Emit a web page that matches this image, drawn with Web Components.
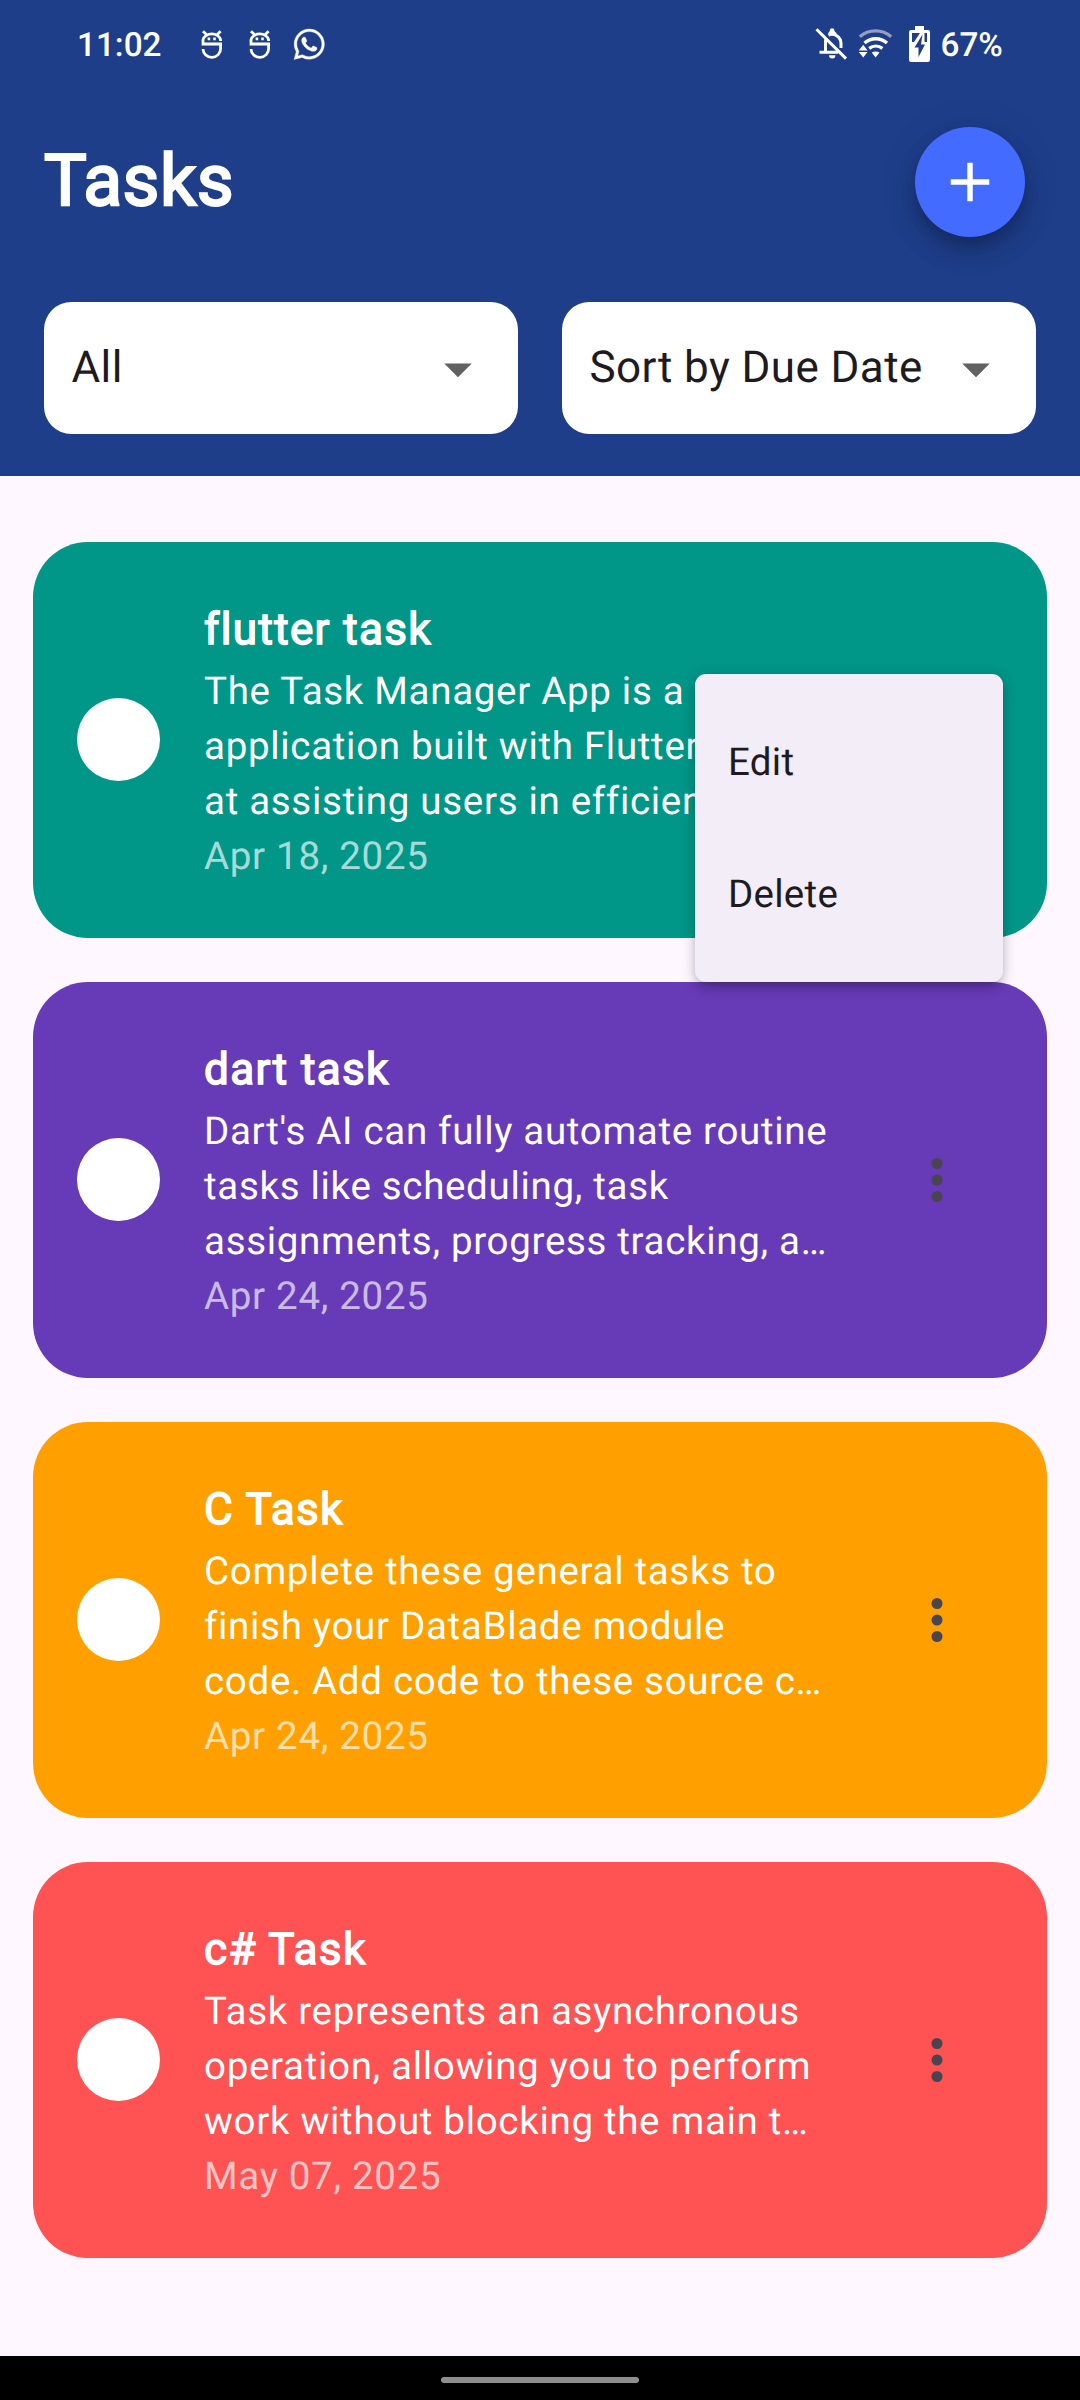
<!DOCTYPE html>
<html lang="en">
<head>
<meta charset="utf-8">
<title>Tasks</title>
<style>
  html, body { margin: 0; padding: 0; }
  body { width: 1080px; height: 2400px; overflow: hidden; font-family: Roboto, sans-serif; text-rendering: geometricPrecision; }
</style>
</head>
<body>
<task-app></task-app>
<script>
const define = (name, html, after) => {
  const t = document.createElement('template');
  t.innerHTML = html;
  customElements.define(name, class extends HTMLElement {
    constructor() {
      super();
      this.attachShadow({ mode: 'open' }).append(t.content.cloneNode(true));
    }
    connectedCallback() { if (after) after(this); }
  });
};

define('robot-icon', `
<style>:host { display: block; } svg { display: block; }</style>
<svg width="32" height="40" viewBox="196 24 32 40"><g fill="none" stroke="#fff" stroke-width="2.8"><path d="M220.6 41V39.8A8.9 7 0 0 0 203 39.8V44H220.6V48.5A8.8 8.6 0 0 1 203 49M203 31.2l3.4 3.2M220.6 31.2l-3.4 3.2"/><path d="M207.6 38.9h2.6M213.2 38.9h2.6"/></g></svg>`);

define('status-bar', `
<style>
  :host { display: flex; height: 88px; box-sizing: border-box; padding: 24px 0 0 77px; color: #fff; font-size: 33.3px; font-weight: 500; line-height: 44px; }
  svg { display: block; flex: none; height: 40px; }
  .time { width: 118.5px; }
  .notes { display: flex; gap: 16.5px; }
  .system { display: flex; margin-left: 487px; }
  .pct { margin-left: 5px; white-space: nowrap; }
</style>
<span class="time">11:02</span>
<div class="notes">
  <robot-icon></robot-icon>
  <robot-icon></robot-icon>
  <svg width="32" viewBox="0 0 32 40"><path transform="translate(1 5) scale(1.27)" fill="#fff" stroke="#fff" stroke-width=".3" d="M17.472 14.382c-.297-.149-1.758-.867-2.03-.967-.273-.099-.471-.148-.67.15-.197.297-.767.966-.94 1.164-.173.199-.347.223-.644.075-.297-.15-1.255-.463-2.39-1.475-.883-.788-1.48-1.761-1.653-2.059-.173-.297-.018-.458.13-.606.134-.133.298-.347.446-.52.149-.174.198-.298.298-.497.099-.198.05-.371-.025-.52-.075-.149-.669-1.612-.916-2.207-.242-.579-.487-.5-.669-.51-.173-.008-.371-.01-.57-.01-.198 0-.52.074-.792.372-.272.297-1.04 1.016-1.04 2.479 0 1.462 1.065 2.875 1.213 3.074.149.198 2.096 3.2 5.077 4.487.709.306 1.262.489 1.694.625.712.227 1.36.195 1.871.118.571-.085 1.758-.719 2.006-1.413.248-.694.248-1.289.173-1.413-.074-.124-.272-.198-.57-.347m-5.421 7.403h-.004a9.87 9.87 0 01-5.031-1.378l-.361-.214-3.741.982.998-3.648-.235-.374a9.86 9.86 0 01-1.51-5.26c.001-5.45 4.436-9.884 9.888-9.884 2.64 0 5.122 1.03 6.988 2.898a9.825 9.825 0 012.893 6.994c-.003 5.45-4.437 9.884-9.885 9.884m8.413-18.297A11.815 11.815 0 0012.05 0C5.495 0 .16 5.335.157 11.892c0 2.096.547 4.142 1.588 5.945L.057 24l6.305-1.654a11.882 11.882 0 005.683 1.448h.005c6.554 0 11.89-5.335 11.893-11.893a11.821 11.821 0 00-3.48-8.413Z"/></svg>
</div>
<div class="system">
  <svg width="40" viewBox="812 24 40 40"><g fill="none" stroke="#fff" stroke-width="3"><path d="M816.5 29.2L846 58.6M825.5 39.5V52M819.5 52.3H838M828.5 35A9.2 9.2 0 0 1 841 43.6V48"/></g><path fill="#fff" d="M828.6 35v-2.5q.9-.3 1.2-2a2.3 2.3 0 0 1 4.6 0q.3 1.7 2.2 2.5V35zM829 55.2h6.4a3.2 3.2 0 0 1-6.4 0z"/></svg>
  <svg width="44" viewBox="852 24 44 40"><g fill="none" stroke="#fff" stroke-width="3.3"><path stroke-opacity=".5" d="M859.8 36.8A24 24 0 0 1 891.2 36.8"/><path d="M864.5 43A17 17 0 0 1 887 43M869.2 48.4A11 11 0 0 1 882.4 48.4"/></g><path fill="#fff" d="M871.7 52.6q3.9-2.4 7.8 0l-3.9 4.9zM858.8 50.4h8.8l-4.4-5.6zM858.8 52h8.8l-4.4 5.6z"/></svg>
  <svg width="40" viewBox="896 24 40 40"><path fill="#fff" d="M915 26h9v4h4a2 2 0 0 1 2 2v28a2 2 0 0 1-2 2h-17a2 2 0 0 1-2-2V32a2 2 0 0 1 2-2h4z"/><path fill="#1e3e8a" d="M912 33h8l-6 9h-2zM924.5 33h2.5v9h-2.5zM922.5 34.5L914.5 47.5H918.5V57L925 44.5H921z"/></svg>
  <span class="pct">67%</span>
</div>`);

define('add-button', `
<style>
  :host { display: flex; width: 110px; height: 110px; border-radius: 50%; background: #446bff; align-items: center; justify-content: center;
    box-shadow: 0 8px 14px -3px rgba(0,0,0,.2), 0 16px 27px rgba(0,0,0,.14), 0 3px 40px rgba(0,0,0,.1); }
  svg { display: block; }
</style>
<svg width="66" height="66" viewBox="0 0 24 24"><path fill="#fff" d="M19 13h-6v6h-2v-6H5v-2h6V5h2v6h6v2z"/></svg>`);

define('select-box', `
<style>
  :host { display: flex; flex: 1; height: 132.5px; box-sizing: border-box; padding: 0 27.5px; border-radius: 27.5px; background: #fff; align-items: center; justify-content: space-between; }
  span { color: #1d1b20; font-size: 44px; letter-spacing: .41px; line-height: 66px; white-space: nowrap; padding-bottom: 3px; }
  svg { display: block; flex: none; margin: 1px 0 0 -10px; }
</style>
<span><slot></slot></span>
<svg width="66" height="66" viewBox="0 0 24 24"><path fill="#616161" d="M7 10l5 5 5-5z"/></svg>`);

define('app-header', `
<style>
  :host { display: block; height: 475.5px; box-sizing: border-box; background: #1e3e8a; }
  .top { display: flex; justify-content: space-between; padding: 38.5px 55px 0 44px; align-items: flex-start; }
  h1 { margin: 0; color: #fff; font-size: 71.5px; font-weight: 400; line-height: 109px; letter-spacing: .5px; -webkit-text-stroke: 2.4px #fff; }
  .filters { display: flex; gap: 44px; padding: 65.3px 44px 0; }
</style>
<status-bar></status-bar>
<div class="top"><h1>Tasks</h1><add-button></add-button></div>
<div class="filters"><select-box>All</select-box><select-box>Sort by Due Date</select-box></div>`);

define('popup-menu', `
<style>
  :host { display: block; width: 308px; height: 308px; box-sizing: border-box; padding: 23.5px 0 20.5px; border-radius: 11px; background: #f3edf7;
    box-shadow: 0 8px 11px -5px rgba(0,0,0,.2), 0 3px 14px rgba(0,0,0,.24); }
  div { height: 132px; padding: 0 33px; line-height: 132px; font-size: 38.5px; color: #1d1b20; letter-spacing: .275px; }
</style>
<div>Edit</div><div>Delete</div>`);

define('task-card', `
<style>
  :host { display: flex; position: relative; height: 396px; box-sizing: border-box; padding: 0 77px 0 44px; border-radius: 55px; align-items: center; color: #fff; background: var(--card); }
  .check { flex: none; width: 82.5px; height: 82.5px; border-radius: 50%; background: #fff; }
  .text { margin-left: 44.5px; flex: 1; white-space: nowrap; font-size: 38.5px; line-height: 55px; letter-spacing: .6875px; padding-top: 2px; }
  .title { font-size: 44px; line-height: 64px; padding-bottom: 3px; letter-spacing: 1.375px; -webkit-text-stroke: 1.5px #fff; }
  .date { color: rgba(255,255,255,.68); }
  svg { flex: none; display: block; }
  ::slotted(popup-menu) { position: absolute; left: 662px; top: 132px; z-index: 2; }
</style>
<div class="check"></div>
<div class="text"><div class="title"><slot name="title"></slot></div><div><slot></slot></div><div class="date"><slot name="date"></slot></div></div>
<svg width="66" height="66" viewBox="0 0 24 24"><g fill="#49454f"><circle cx="12" cy="6" r="2"/><circle cx="12" cy="12" r="2"/><circle cx="12" cy="18" r="2"/></g></svg>
<slot name="menu"></slot>`, el => {
  el.style.setProperty('--card', el.getAttribute('color'));
});

define('nav-bar', `
<style>
  :host { display: flex; height: 44px; background: #000; align-items: center; justify-content: center; }
  i { width: 198px; height: 6px; border-radius: 3px; background: #8e8e8e; margin-top: 4px; }
</style><i></i>`);

define('task-app', `
<style>
  :host { display: flex; flex-direction: column; height: 2400px; background: #fef7ff; }
  main { flex: 1; display: flex; flex-direction: column; gap: 44px; padding: 66px 33px 0; }
  task-card:first-child { z-index: 1; }
</style>
<app-header></app-header>
<main>
  <task-card color="#009688"><span slot="title">flutter task</span>The Task Manager App is a<br>application built with Flutter<br>at assisting users in efficien…<span slot="date">Apr 18, 2025</span><popup-menu slot="menu"></popup-menu></task-card>
  <task-card color="#673ab7"><span slot="title">dart task</span>Dart's AI can fully automate routine<br>tasks like scheduling, task<br>assignments, progress tracking, a…<span slot="date">Apr 24, 2025</span></task-card>
  <task-card color="#ffa000"><span slot="title">C Task</span>Complete these general tasks to<br>finish your DataBlade module<br>code. Add code to these source c…<span slot="date">Apr 24, 2025</span></task-card>
  <task-card color="#ff5252"><span slot="title">c# Task</span>Task represents an asynchronous<br>operation, allowing you to perform<br>work without blocking the main t…<span slot="date">May 07, 2025</span></task-card>
</main>
<nav-bar></nav-bar>`);
</script>
</body>
</html>
